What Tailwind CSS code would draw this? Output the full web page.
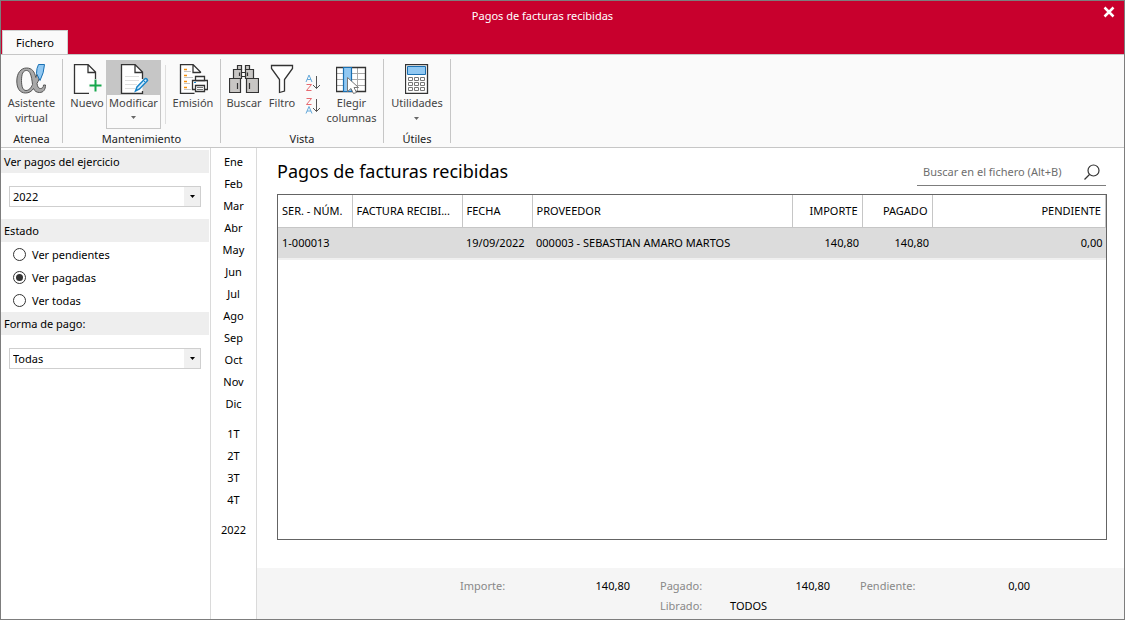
<!DOCTYPE html>
<html lang="es">
<head>
<meta charset="utf-8">
<title>Pagos de facturas recibidas</title>
<script src="https://cdn.jsdelivr.net/npm/@tailwindcss/browser@4"></script>
</head>
<body class="flex min-h-screen flex-col border border-[#7d7d7d] bg-white font-['Noto_Sans','Open_Sans',sans-serif] text-[11px] leading-[15px] text-black">

<!-- Title bar and tab -->
<header class="relative flex h-[53px] shrink-0 flex-col justify-between bg-[#c8002d]">
  <h1 class="pt-[7px] pr-10 text-center text-white">Pagos de facturas recibidas</h1>
  <button aria-label="Cerrar" class="absolute top-px right-[5px] p-1 text-white">
    <svg class="block size-[12px]" viewBox="0 0 12 12" fill="none" stroke="currentColor" stroke-width="2.5"><path d="M1.500 1.500 10.500 10.500M10.500 1.500 1.500 10.500"/></svg>
  </button>
  <button class="ml-px h-6 w-[66px] self-start border-x border-t border-[#d0d0d0] bg-[#fafafa]">Fichero</button>
</header>

<!-- Ribbon -->
<section class="flex shrink-0 border-y border-[#c6c6c6] bg-[#fafafa] py-[4px] text-[#444]">
  <div class="flex h-[84px] w-[62px] flex-col items-center justify-between border-r border-[#c6c6c6] pt-px">
    <button class="flex flex-col items-center pt-1">
      <svg class="mb-px block h-[30px] w-[32px]" viewBox="0 0 32 30" fill="none">
        <path fill-rule="evenodd" d="M25 7C24 13 22.500 17 21 19.500 21.500 23 22.500 24.500 24.500 24.500 26.500 24.500 27.500 23 27.500 21H29.500C29.500 25.500 27.500 28.500 23.500 28.500 20.500 28.500 18.500 27 17.500 24.500 15.500 27.500 13 29 9.500 29 4 29 .8 24.500 .8 17 .8 9 5 4 10.500 4 16 4 18.500 7.500 19.800 13.500 20.800 11.500 21.300 9 21.500 7ZM10.500 6.500C7 6.500 5.500 10 5.500 16.500 5.500 23 7 26.500 10 26.500 13 26.500 15 24 16.500 20.500 15.500 11 14 6.500 10.500 6.500Z" fill="#a9a9a9" stroke="#555"/>
        <path d="M22.500.500H28.500Q28 9 24 16.500L20.500 9.500Q20.500 4 22.500.500z" fill="#91c8f2" stroke="#1a70b3"/>
      </svg>
      <span>Asistente<br>virtual</span>
    </button>
    <h2 class="leading-[9px] text-[#222]">Atenea</h2>
  </div>

  <div class="flex h-[84px] w-[158px] flex-col items-center justify-between border-r border-[#c6c6c6] pt-px">
    <div class="flex w-full items-start pl-[5px]">
      <button class="flex w-[38px] flex-col items-center pt-1">
        <svg class="mb-px block h-[30px] w-[30px]" viewBox="1 0 30 30" fill="none">
          <path d="M17.500 29.500H3.500V.500H17L24.500 8V19.500H17.500z" fill="#fff"/>
          <path d="M18 29.500H3.500V.500H17L24.500 8V15M17 .500V8.500H24" stroke="#333" stroke-width="1.300"/>
          <path d="M24.500 15.500V27.500M18.500 21.500H30.500" stroke="#17a74c" stroke-width="2"/>
        </svg>
        <span>Nuevo</span>
      </button>
      <button class="flex h-[69px] w-[55px] flex-col items-center border border-[#c6c6c6]">
        <span class="flex w-full justify-center bg-[#c6c6c6] pt-[3px] pb-px">
          <svg class="block h-[30px] w-[31px]" viewBox="-1 0 31 30" fill="none">
            <path d="M2.500.500H16L23.500 8V29.500H2.500z" fill="#fff"/>
            <path d="M23.500 15V8L16 .500H2.500V29.500H23.500V27M16 .500V8.500H23" stroke="#333" stroke-width="1.300"/>
            <path d="M6 12.500H20M6 16.500H20M6 20.500H18M6 24.500H16" stroke="#dedede"/>
            <path d="M16.500 27 18 23 26 14.800Q28 14 28.500 16.500L20.500 25z" fill="#d9efff" stroke="#1683c8" stroke-width="1.500"/><path d="M24.500 16.500 27 19" stroke="#1683c8"/>
          </svg>
        </span>
        <span>Modificar</span>
        <svg class="mt-[6px] block h-[3px] w-[5px]" viewBox="0 0 5 3" fill="#666"><path d="M0 0H5L2.500 3z"/></svg>
      </button>
      <div class="mt-[5px] ml-[4px] h-[59px] w-px bg-[#dedede]"></div>
      <button class="flex w-[54px] flex-col items-center pt-1">
        <svg class="mb-px block h-[30px] w-[30px]" viewBox="-1 0 30 30" fill="none">
          <path d="M1.500.500H14L21.500 8V29.500H1.500z" fill="#fff"/>
          <path d="M15.500 29.500H1.500V.500H14L21.500 8V9M14 .500V8.500H21.500" stroke="#333" stroke-width="1.300"/>
          <path d="M5 5.500H8M5 11.500H8M5 17.500H8M5 23.500H8" stroke="#f5900c" stroke-width="1.300"/>
          <path d="M5 7.500H12M5 13.500H14M5 19.500H11M5 25.500H12" stroke="#c4c4c4"/>
          <path d="M13.500 16.500H28.500V25.500H13.500z" fill="#fff" stroke="#333" stroke-width="1.300"/>
          <path d="M16.500 16.500V12.500H25.500V16.500zM16.500 21.500H25.500V27.500H16.500z" fill="#fff" stroke="#333" stroke-width="1.300"/>
          <path d="M18 23.500H24M18 25.500H24" stroke="#777"/><path d="M15 18.500H17" stroke="#1683c8"/>
        </svg>
        <span>Emisión</span>
      </button>
    </div>
    <h2 class="leading-[9px] text-[#222]">Mantenimiento</h2>
  </div>

  <div class="flex h-[84px] w-[163px] flex-col items-center justify-between border-r border-[#c6c6c6] pt-px">
    <div class="flex w-full items-start pl-[4px]">
      <button class="flex w-[38px] flex-col items-center pt-1">
        <svg class="mb-px block h-[30px] w-[30px]" viewBox="0 0 30 30" fill="#c8c6c4" stroke="#333" stroke-width="1.200">
          <path d="M8.500 1.500H12.500V5.500H8.500zM16.500 1.500H20.500V5.500H16.500z"/>
          <path d="M4.500 5.500H12.500V14.500H4.500zM16.500 5.500H24.500V14.500H16.500z"/>
          <path d="M12.500 8.500H16.500V12.500H12.500z" fill="#fff"/>
          <path d="M.500 14.500H11.500V28.500H.500zM17.500 14.500H29.500V28.500H17.500z"/>
          <path d="M10.500 8.500V12M18.500 8.500V12M8.500 19V25M20.500 19V25"/>
        </svg>
        <span>Buscar</span>
      </button>
      <button class="flex w-[38px] flex-col items-center pt-1">
        <svg class="mb-px block h-[30px] w-[24px]" viewBox="0 0 24 30" fill="#fff" stroke="#333" stroke-width="1.300"><path d="M1.500 1.500H22.500V4.500L14.500 15.500V27L9.500 28.500V15.500L1.500 4.500z"/></svg>
        <span>Filtro</span>
      </button>
      <div class="flex w-[23px] flex-col items-center gap-[5px] pt-[14px]">
        <button aria-label="Orden ascendente">
          <svg class="block h-[18px] w-[16px]" viewBox="0 0 16 18" fill="none"><path d="M1 8 4 1 7 8M2 5.500H6" stroke="#65a9da"/><path d="M1.500 10.500H6.500L1.500 16.500H6.500" stroke="#e76a70"/><path d="M11.500 2V14.500M8 11 11.500 14.500 15 11" stroke="#555"/></svg>
        </button>
        <button aria-label="Orden descendente">
          <svg class="block h-[18px] w-[16px]" viewBox="0 0 16 18" fill="none"><path d="M1.500 1.500H6.500L1.500 7.500H6.500" stroke="#e76a70"/><path d="M1 16.500 4 9.500 7 16.500M2 14H6" stroke="#65a9da"/><path d="M11.500 2V14.500M8 11 11.500 14.500 15 11" stroke="#555"/></svg>
        </button>
      </div>
      <button class="flex w-[55px] flex-col items-center pt-1">
        <svg class="mb-px block h-[30px] w-[31px]" viewBox="1 0 31 30" fill="none">
          <path d="M1.500 3.500H30.500V27.500H1.500z" fill="#fff"/>
          <path d="M1 9.500H31M1 15.500H31M1 21.500H31M22.500 3V27" stroke="#aaa"/>
          <path d="M1.500 3.500H30.500V27.500H1.500z" stroke="#333" stroke-width="1.300"/>
          <path d="M8.500 3.500H16.500V27.500H8.500z" fill="#91c8f2" stroke="#1a70b3" stroke-width="1.200"/>
          <path d="M12.500 13.500V27.500L16 24.500 18.500 29.500 21.500 28.500 19 23.500H23.500z" fill="#fff" stroke="#777"/>
        </svg>
        <span>Elegir<br>columnas</span>
      </button>
    </div>
    <h2 class="leading-[9px] text-[#222]">Vista</h2>
  </div>

  <div class="flex h-[84px] w-[67px] flex-col items-center justify-between border-r border-[#c6c6c6] pt-px">
    <button class="flex flex-col items-center pt-1">
      <svg class="mb-px block h-[30px] w-[24px]" viewBox="0 0 24 30" fill="none">
        <path d="M.500.500H22.500V29.500H.500z" fill="#fff" stroke="#333" stroke-width="1.300"/>
        <path d="M2.500 2.500H20.500V10.500H2.500z" fill="#91c8f2" stroke="#1a70b3"/>
        <path d="M3.500 13.500H7.500V16.500H3.500zM9.500 13.500H13.500V16.500H9.500zM15.500 13.500H19.500V16.500H15.500zM3.500 18.500H7.500V21.500H3.500zM9.500 18.500H13.500V21.500H9.500zM15.500 18.500H19.500V21.500H15.500zM3.500 23.500H7.500V26.500H3.500zM9.500 23.500H13.500V26.500H9.500zM15.500 23.500H19.500V26.500H15.500z" stroke="#777"/>
      </svg>
      <span>Utilidades</span>
      <svg class="mt-[7px] block h-[3px] w-[5px]" viewBox="0 0 5 3" fill="#666"><path d="M0 0H5L2.500 3z"/></svg>
    </button>
    <h2 class="leading-[9px] text-[#222]">Útiles</h2>
  </div>
</section>

<div class="flex flex-1">
  <!-- Filters -->
  <aside class="w-[210px] shrink-0 border-r border-[#dadada] pt-[2px] pr-px">
    <label for="year" class="block h-[23px] bg-[#eee] px-[3px] leading-[23px]">Ver pagos del ejercicio</label>
    <div class="relative mx-2 mt-[13px] mb-3">
      <select id="year" class="block h-[21px] w-full appearance-none border border-[#cfcfcf] bg-white px-[3px] leading-[19px]"><option>2022</option></select>
      <span class="pointer-events-none absolute inset-y-px right-px flex w-4 items-center justify-center bg-[#f0f0f0]"><svg class="h-[3px] w-[5px]" viewBox="0 0 5 3"><path d="M0 0H5L2.500 3z"/></svg></span>
    </div>
    <fieldset>
      <legend class="block h-[23px] w-full bg-[#eee] px-[3px] leading-[23px]">Estado</legend>
      <div class="flex flex-col pt-px pl-3">
        <label class="flex h-[23px] items-center gap-[6px]"><input type="radio" name="estado" class="size-[13px] appearance-none rounded-full border border-[#333] bg-white p-[2px] bg-clip-content checked:bg-[#333]">Ver pendientes</label>
        <label class="flex h-[23px] items-center gap-[6px]"><input type="radio" name="estado" checked class="size-[13px] appearance-none rounded-full border border-[#333] bg-white p-[2px] bg-clip-content checked:bg-[#333]">Ver pagadas</label>
        <label class="flex h-[23px] items-center gap-[6px]"><input type="radio" name="estado" class="size-[13px] appearance-none rounded-full border border-[#333] bg-white p-[2px] bg-clip-content checked:bg-[#333]">Ver todas</label>
      </div>
    </fieldset>
    <label for="pay" class="block h-[23px] bg-[#eee] px-[3px] leading-[23px]">Forma de pago:</label>
    <div class="relative mx-2 mt-[13px]">
      <select id="pay" class="block h-[21px] w-full appearance-none border border-[#cfcfcf] bg-white px-[3px] leading-[19px]"><option>Todas</option></select>
      <span class="pointer-events-none absolute inset-y-px right-px flex w-4 items-center justify-center bg-[#f0f0f0]"><svg class="h-[3px] w-[5px]" viewBox="0 0 5 3"><path d="M0 0H5L2.500 3z"/></svg></span>
    </div>
  </aside>

  <!-- Period picker -->
  <nav class="flex w-[46px] shrink-0 flex-col border-r border-[#dadada] pt-[2px]">
    <button class="h-[22px]">Ene</button><button class="h-[22px]">Feb</button><button class="h-[22px]">Mar</button><button class="h-[22px]">Abr</button><button class="h-[22px]">May</button><button class="h-[22px]">Jun</button><button class="h-[22px]">Jul</button><button class="h-[22px]">Ago</button><button class="h-[22px]">Sep</button><button class="h-[22px]">Oct</button><button class="h-[22px]">Nov</button><button class="h-[22px]">Dic</button>
    <button class="mt-2 h-[22px]">1T</button><button class="h-[22px]">2T</button><button class="h-[22px]">3T</button><button class="h-[22px]">4T</button>
    <button class="mt-2 h-[22px]">2022</button>
  </nav>

  <main class="flex min-w-0 flex-1 flex-col">
    <div class="flex items-end justify-between pt-[9px] pr-[18px] pb-2 pl-5">
      <h2 class="pb-px text-[18px] leading-[28px]">Pagos de facturas recibidas</h2>
      <div class="flex h-[28px] w-[189px] items-center border-b border-[#7d7d7d] px-[6px]">
        <input type="search" aria-label="Buscar en el fichero" placeholder="Buscar en el fichero (Alt+B)" class="min-w-0 flex-1 bg-transparent outline-none placeholder:text-[#6e6e6e]">
        <button aria-label="Buscar"><svg class="block size-[16px]" viewBox="0 0 16 16" fill="none" stroke="#333" stroke-width="1.200"><circle cx="9.500" cy="6.500" r="5.500"/><path d="M5.500 10.500.500 15.500"/></svg></button>
      </div>
    </div>

    <div class="mr-[17px] mb-7 ml-5 flex-1 border border-[#646464]">
      <table class="w-full table-fixed border-collapse">
        <colgroup><col class="w-[74px]"><col class="w-[110px]"><col class="w-[70px]"><col class="w-[260px]"><col class="w-[70px]"><col class="w-[70px]"><col></colgroup>
        <thead>
          <tr class="h-8 border-b border-[#c6c6c6] text-left">
            <th class="border-r border-[#c6c6c6] px-1 font-normal whitespace-nowrap">SER. - NÚM.</th>
            <th class="border-r border-[#c6c6c6] px-1 font-normal whitespace-nowrap">FACTURA RECIBI...</th>
            <th class="border-r border-[#c6c6c6] px-1 font-normal">FECHA</th>
            <th class="border-r border-[#c6c6c6] px-1 font-normal">PROVEEDOR</th>
            <th class="border-r border-[#c6c6c6] px-1 text-right font-normal">IMPORTE</th>
            <th class="border-r border-[#c6c6c6] px-1 text-right font-normal">PAGADO</th>
            <th class="border-r border-[#c6c6c6] px-1 text-right font-normal">PENDIENTE</th>
          </tr>
        </thead>
        <tbody>
          <tr class="h-8 border-b-2 border-[#f0f0f0] bg-[#dcdcdc]">
            <td class="px-1">1-000013</td><td></td><td class="px-1">19/09/2022</td><td class="px-1">000003 - SEBASTIAN AMARO MARTOS</td><td class="px-[3px] text-right">140,80</td><td class="px-[3px] text-right">140,80</td><td class="px-[3px] text-right">0,00</td>
          </tr>
        </tbody>
      </table>
    </div>

    <footer class="bg-[#f5f5f5] pt-2 pr-[94px] pb-[3px]">
      <dl class="ml-auto grid w-[570px] grid-cols-[70px_100px_30px_70px_100px_30px_70px_100px] leading-5 text-[#888]">
        <dt>Importe:</dt><dd class="text-right text-black">140,80</dd>
        <dt class="col-start-4">Pagado:</dt><dd class="text-right text-black">140,80</dd>
        <dt class="col-start-7">Pendiente:</dt><dd class="text-right text-black">0,00</dd>
        <dt class="col-start-4">Librado:</dt><dd class="text-black">TODOS</dd>
      </dl>
    </footer>
  </main>
</div>
</body>
</html>
